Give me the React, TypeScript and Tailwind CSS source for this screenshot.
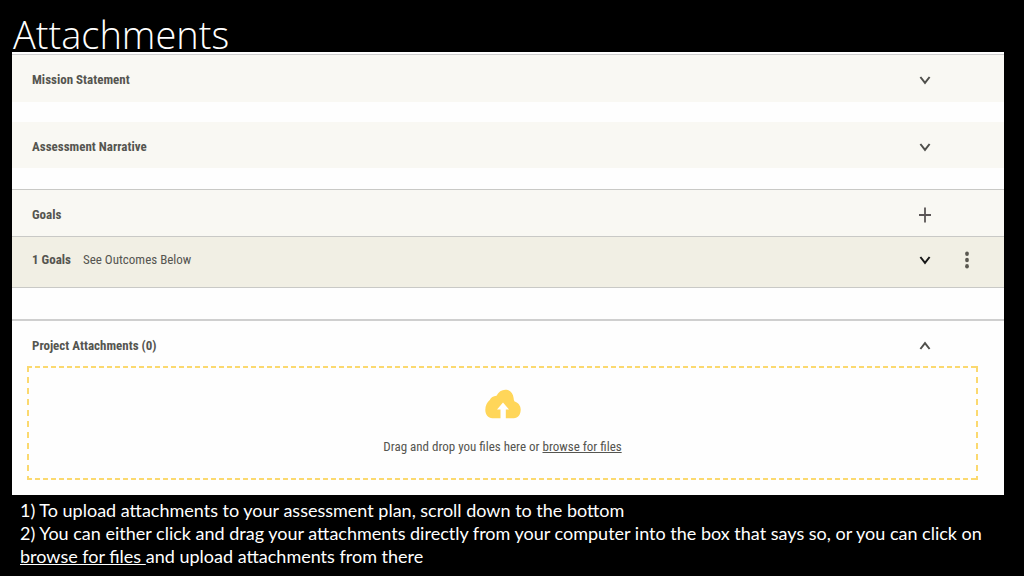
import type { ReactNode } from 'react'

type RowProps = {
  title: string
  detail?: string
  className: string
  action: ReactNode
  menu?: ReactNode
}

function Chevron({ up = false, className = 'text-[#4f4f4b]' }: { up?: boolean; className?: string }) {
  return (
    <svg viewBox="0 0 24 24" className={`size-6 ${className}`} fill="none" stroke="currentColor" strokeWidth="2" aria-hidden="true">
      <path d={up ? 'M7.4 15 12 9.2 16.6 15' : 'M7.4 9 12 14.8 16.6 9'} />
    </svg>
  )
}

function Plus() {
  return (
    <svg viewBox="0 0 24 24" className="size-6 text-[#5a5556]" fill="none" stroke="currentColor" strokeWidth="1.8" aria-hidden="true">
      <path d="M12 4.5v15M6 12h12" />
    </svg>
  )
}

function Dots() {
  return (
    <svg viewBox="0 0 24 24" className="size-6 text-[#5a5850]" fill="currentColor" aria-hidden="true">
      <ellipse cx="12" cy="5.8" rx="1.9" ry="2.2" />
      <ellipse cx="12" cy="12" rx="1.9" ry="2.2" />
      <ellipse cx="12" cy="18.2" rx="1.9" ry="2.2" />
    </svg>
  )
}

function CloudUpload() {
  return (
    <svg viewBox="0 0 36 30" className="h-[30px] w-9" aria-hidden="true">
      <path
        fill="#ffd659"
        d="M7.500 29.300C3 29.300.3 25.500.3 20.800c0-4.600 2-7.600 4.500-9.800C6 8.500 8.200 7 11.500 6.800 13.500 2.800 16.600.7 20.300.7c4.700 0 7.800 3.400 8.300 8.300.1 1.400.3 2.600 1 3.600 3.700 1.200 6.100 4.300 6.100 8 0 4.900-2.500 8.700-7 8.700z"
      />
      <path fill="#fff" d="M18 13.500l6 7h-3.200v9.500h-5.300v-9.500h-3.500z" />
    </svg>
  )
}

function Row({ title, detail, className, action, menu }: RowProps) {
  return (
    <div className={`flex items-center pr-[25px] pl-5 ${className}`}>
      <h2 className="font-bold">{title}</h2>
      {detail && <p className="ml-3">{detail}</p>}
      <div className="ml-auto flex gap-[18px]">
        {action}
        <div className="flex w-6">{menu}</div>
      </div>
    </div>
  )
}

export default function App() {
  return (
    <main className="min-h-screen bg-black pt-3 pr-5 pl-3 font-['Lato',sans-serif] text-white">
      <h1 className="h-10 pl-px font-['Open_Sans',sans-serif] text-[38px] leading-[44px] font-light">Attachments</h1>

      <section className="bg-[#fefefe] pt-0.5 pb-[15px] font-['Roboto_Condensed','Roboto',sans-serif] text-[13px] leading-5 text-[#555550]">
        <Row
          title="Mission Statement"
          className="h-12 border-t border-[#cfcfcf] bg-[#f9f8f3] pt-0.5"
          action={<button type="button" aria-label="Expand Mission Statement"><Chevron /></button>}
        />
        <Row
          title="Assessment Narrative"
          className="mt-5 h-[46px] bg-[#f9f8f3] pt-1"
          action={<button type="button" aria-label="Expand Assessment Narrative"><Chevron /></button>}
        />
        <Row
          title="Goals"
          className="mt-[21px] h-12 border-y border-[#c9c9c6] bg-[#f9f8f3] pt-1"
          action={<button type="button" aria-label="Add goal"><Plus /></button>}
        />
        <Row
          title="1 Goals"
          detail="See Outcomes Below"
          className="h-[51px] border-b border-[#c9c9c6] bg-[#f1efe4] pb-1"
          action={<button type="button" aria-label="Expand goal"><Chevron className="text-[#171717]" /></button>}
          menu={<button type="button" aria-label="Goal options"><Dots /></button>}
        />
        <Row
          title="Project Attachments (0)"
          className="mt-[31px] h-[47px] border-t-2 border-[#cfcfcf] pt-1"
          action={<button type="button" aria-label="Collapse Project Attachments"><Chevron up /></button>}
        />

        <div className="mr-[26px] ml-[15px] flex h-[114px] flex-col items-center bg-[repeating-linear-gradient(90deg,#fbd96f_0_5px,transparent_5px_8px),repeating-linear-gradient(90deg,#fbd96f_0_5px,transparent_5px_8px),repeating-linear-gradient(#fbd96f_0_6px,transparent_6px_11px),repeating-linear-gradient(#fbd96f_0_6px,transparent_6px_11px)] bg-[length:100%_2px,100%_2px,2px_100%,2px_100%] bg-[position:top,bottom,left,right] bg-no-repeat pt-[23px]">
          <CloudUpload />
          <p className="mt-[18px]">
            Drag and drop you files here or <a href="#browse" className="underline">browse for files</a>
          </p>
        </div>
      </section>

      <div className="pt-1 pl-2 text-[18px] leading-[23px]">
        <p>1) To upload attachments to your assessment plan, scroll down to the bottom</p>
        <p>
          2) You can either click and drag your attachments directly from your computer into the box that says so, or you can click on{' '}
          <u className="whitespace-pre-wrap">browse for files </u>and upload attachments from there
        </p>
      </div>
    </main>
  )
}
